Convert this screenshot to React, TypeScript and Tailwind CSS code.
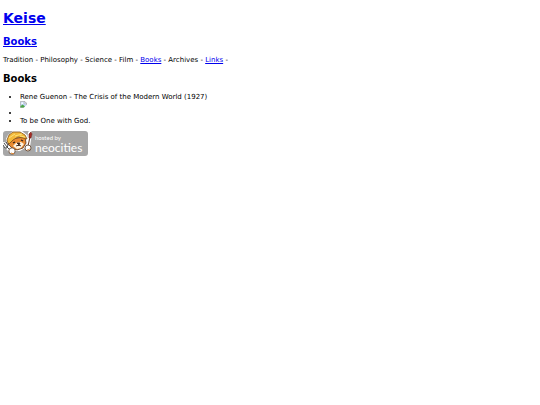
import React from "react";

const heading = "text-[10px] leading-[12px] font-bold";
const link = "text-[#0000ee] underline";

function BrokenImage() {
  return (
    <svg role="img" aria-label="Book cover" viewBox="0 0 16 16" className="block h-[7px] w-[7px]">
      <path d="M1 1h10l4 4v10H1z" fill="#c3d6f5" stroke="#9a9a9a" strokeWidth="1.4" />
      <path d="M10 1v5h5z" fill="#fff" stroke="#9a9a9a" />
      <circle cx="5" cy="5" r="2" fill="#fff" />
      <path d="M1 15v-3l5-4 5 4v3z" fill="#4aa545" />
      <path d="M8 16l8-8v8z" fill="#fff" />
    </svg>
  );
}

function Cat() {
  return (
    <svg aria-hidden="true" viewBox="0 0 31 25" className="h-[25px] w-[31px] shrink-0">
      <g stroke="#fff" strokeWidth="4" strokeLinecap="round" fill="none">
        <path d="M1 13l7 7" />
        <path d="M27 2l-2 14" />
      </g>
      <path d="M5 4l5-4h9l5 4 1 5-3 8-5 3H9l-4-4-2-8z" fill="#fff" />
      <path d="M6 8l-1 5 4 4 5 2 6-2 3-5-1-6z" fill="#e98b32" stroke="#5d3419" strokeWidth=".8" />
      <path d="M4 9l2-5 4-3h7l5 3 2 4-4-1-5-1-5 3-4 4-1-1z" fill="#f4b93a" stroke="#80511b" strokeWidth=".8" />
      <path d="M6 7l6-4M12 5l7-2M17 5l5 1" stroke="#fbe27b" strokeWidth="1" fill="none" />
      <path d="M10 15l3-3 5-1 3 2-3 4-4 1z" fill="#fff3df" />
      <path d="M10 12l2-1M18 9l2 1" stroke="#2d2018" strokeWidth="1.3" />
      <path d="M14 12h3l-1 2zM13 15l3-1 2 1" stroke="#3d2418" strokeWidth=".8" fill="#3d2418" />
      <path d="M4 16l4 4M0 14l2 3 2 0M3 11l2 3-1 3M1 12l3 4" stroke="#4c4c4c" strokeWidth="1" fill="none" />
      <circle cx="9" cy="20" r="3.2" fill="#fff" stroke="#583b25" strokeWidth=".8" />
      <path d="M8 22l3 1" stroke="#e98b32" strokeWidth="1" />
      <path d="M27 6l-2 9" stroke="#704027" strokeWidth="1.1" />
      <path d="M28 1l1 2-1 4-2 0 0-4z" fill="#a82c26" stroke="#642019" strokeWidth=".6" />
      <circle cx="25" cy="17" r="3" fill="#fff" stroke="#583b25" strokeWidth=".8" />
      <path d="M24 19l3-1" stroke="#e9a05d" strokeWidth="1" />
    </svg>
  );
}

export default function App() {
  return (
    <main className="bg-white px-[3px] pt-[9px] font-['DejaVu_Sans',sans-serif] text-[7px] leading-[8px] text-black">
      <h1 className="text-[14px] leading-[18px] font-bold">
        <a href="#home" className={link}>Keise</a>
      </h1>
      <h2 className={`mt-[9px] ${heading}`}>
        <a href="#books" className={link}>Books</a>
      </h2>
      <nav aria-label="Sections" className="mt-[8px]">
        Tradition - Philosophy - Science - Film -{" "}
        <a href="#books" className={link}>Books</a> - Archives -{" "}
        <a href="#links" className={link}>Links</a> -
      </nav>
      <h2 id="books" className={`mt-[9px] ${heading}`}>Books</h2>
      <ul className="mt-[8px] list-disc pl-[17px]">
        <li>
          Rene Guenon - The Crisis of the Modern World (1927)
          <BrokenImage />
        </li>
        <li className="mt-[1px] min-h-[8px]"></li>
        <li>To be One with God.</li>
      </ul>
      <a
        href="#neocities"
        aria-label="Hosted by Neocities"
        className="mt-[6px] flex h-[25px] w-[85px] overflow-hidden rounded-[3px] bg-[#a7a7a7] font-['Lato',sans-serif] text-white"
      >
        <Cat />
        <span className="flex flex-col pt-[3px] pl-[1px]">
          <span className="text-[6px] leading-[8px]">hosted by</span>
          <span className="text-[12px] leading-[11px]">neocities</span>
        </span>
      </a>
    </main>
  );
}
